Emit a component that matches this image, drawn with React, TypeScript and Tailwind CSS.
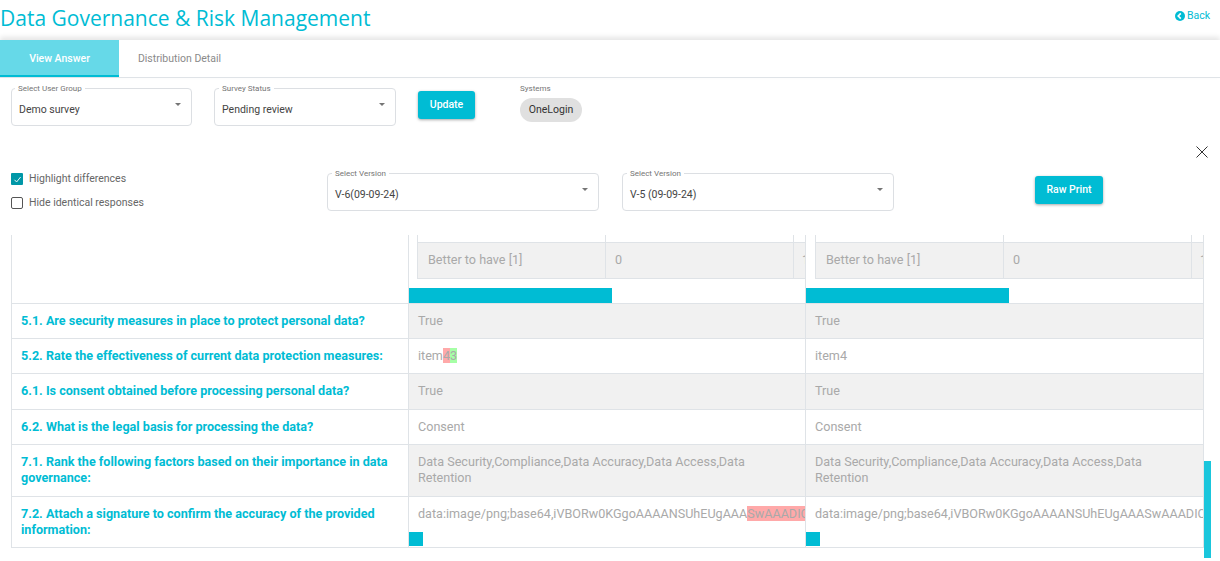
import React from "react";

const CYAN = "bg-[#00bcd4]";

function Select({ label, value, w, lx = "left-[4px]" }: { label: string; value: string; w: string; lx?: string }) {
  return (
    <div className={`relative h-[38px] ${w} rounded-[4px] border border-[#dcdfe3] bg-white flex items-center pl-[7px] pr-[10px] pt-[6px]`}>
      <span className={`absolute ${lx} top-[-5px] bg-white px-[3px] text-[8px] leading-[10px] text-[#757575]`}>{label}</span>
      <span className="flex-1 text-[10.5px] text-[#444]">{value}</span>
      <span className="mb-[11px] w-0 h-0 border-x-[3.5px] border-x-transparent border-t-[3.5px] border-t-[#757575]" />
    </div>
  );
}

function Button({ children, w }: { children: React.ReactNode; w: string }) {
  return (
    <button className={`${w} h-[28px] rounded-[3px] ${CYAN} text-white text-[10.5px] font-medium shadow-[0_1px_3px_rgba(0,0,0,0.35)]`}>
      {children}
    </button>
  );
}

function Check({ checked, label }: { checked?: boolean; label: string }) {
  return (
    <div className="flex items-center gap-[6px] h-[12px]">
      {checked ? (
        <span className="w-[12px] h-[12px] rounded-[1px] bg-[#0097a7] flex items-center justify-center">
          <svg width="9" height="9" viewBox="0 0 9 9" fill="none">
            <path d="M1.5 4.8 3.6 7 7.6 2" stroke="white" strokeWidth="0.9" />
          </svg>
        </span>
      ) : (
        <span className="w-[12px] h-[12px] rounded-[2px] border border-[#555] bg-white" />
      )}
      <span className="text-[10.5px] text-[#666]">{label}</span>
    </div>
  );
}

function Row({
  q,
  a,
  b,
  h,
  gray,
}: {
  q: string;
  a: React.ReactNode;
  b: React.ReactNode;
  h: string;
  gray?: boolean;
}) {
  const shade = gray ? "bg-[#f1f1f1]" : "bg-white";
  return (
    <div className={`flex ${h} border-b border-[#dfe3e7]`}>
      <div className="w-[396px] shrink-0 pl-[9px] pr-[10px] pt-[9px] text-[12.6px] leading-[16px] font-bold text-[#00bcd4]">{q}</div>
      <div className={`w-[397px] shrink-0 border-l border-[#dfe3e7] ${shade} pl-[9px] pr-[30px] pt-[9px] text-[12.6px] leading-[16px] text-[#a9a9a9]`}>{a}</div>
      <div className={`flex-1 min-w-0 border-l border-[#dfe3e7] ${shade} pl-[9px] pr-[30px] pt-[9px] text-[12.6px] leading-[16px] text-[#a9a9a9]`}>{b}</div>
    </div>
  );
}

function Nested({ ml }: { ml: string }) {
  return (
    <div className="relative h-[68px] overflow-hidden">
      <div className={`flex h-[44px] ${ml} border-l border-b border-[#dfe3e7]`}>
        <div className="w-[187px] flex flex-col">
          <div className="h-[8px] border-b border-[#dfe3e7]" />
          <div className="flex-1 bg-[#f1f1f1] pl-[10px] flex items-center text-[12.6px] text-[#a9a9a9]">Better to have [1]</div>
        </div>
        <div className="w-[188px] flex flex-col border-l border-[#dfe3e7]">
          <div className="h-[8px] border-b border-[#dfe3e7]" />
          <div className="flex-1 bg-[#f1f1f1] pl-[9px] flex items-center text-[12.6px] text-[#a9a9a9]">0</div>
        </div>
        <div className="flex-1 min-w-0 flex flex-col border-l border-[#dfe3e7] overflow-hidden">
          <div className="h-[8px] border-b border-[#dfe3e7]" />
          <div className="flex-1 bg-[#f1f1f1] pl-[8px] flex items-center text-[12.6px] text-[#a9a9a9]">1</div>
        </div>
      </div>
      <div className={`mt-[9px] h-[15px] w-[203px] ${CYAN}`} />
    </div>
  );
}

function Data({ tail, hl }: { tail: string; hl?: boolean }) {
  return (
    <div className="-mr-[30px]">
      <div className="whitespace-nowrap overflow-hidden">
        data:image/png;base64,iVBORw0KGgoAAAANSUhEUgAAA
        {hl ? <span className="bg-[#ffa9a9]">{tail}</span> : tail}
      </div>
      <div className={`-ml-[9px] mt-[10px] h-[14px] w-[14px] ${CYAN}`} />
    </div>
  );
}

export default function App() {
  return (
    <div className="relative h-[561px] w-[1220px] overflow-hidden bg-white font-['Roboto',sans-serif]">
      {/* Header */}
      <header className="flex h-[40px] justify-between">
        <h1 className="text-[21px] leading-[37px] text-[#00bcd4] font-['Open_Sans',sans-serif] font-normal">Data Governance &amp; Risk Management</h1>
        <a className="mr-[10px] mt-[9px] flex h-[14px] items-center gap-[2px] text-[10.5px] text-[#00bcd4]">
          <svg width="10" height="10" viewBox="0 0 10 10">
            <circle cx="5" cy="5" r="5" fill="#00bcd4" />
            <path d="M5.8 2.4 3.2 5l2.6 2.6" stroke="white" strokeWidth="1.6" fill="none" />
          </svg>
          Back
        </a>
      </header>

      {/* Tabs */}
      <nav className="flex h-[38px] border-b border-[#dfe3e7] shadow-[0_-3px_5px_rgba(0,0,0,0.1)]">
        <div className="flex h-[37px] w-[119px] items-center justify-center border-b-2 border-[#00bcd4] bg-[#66d9e8] pt-[2px] text-[10.5px] font-medium text-white">View Answer</div>
        <div className="flex h-[37px] w-[121px] items-center justify-center text-[10.5px] text-[#8a8a8a]">Distribution Detail</div>
      </nav>

      {/* Filters */}
      <section className="flex h-[58px] pl-[11px] pt-[10px]">
        <Select label="Select User Group" value="Demo survey" w="w-[181px]" lx="left-[3px]" />
        <div className="ml-[22px]"><Select label="Survey Status" value="Pending review" w="w-[182px]" /></div>
        <div className="ml-[22px] mt-[3px]"><Button w="w-[57px]">Update</Button></div>
        <div className="ml-[45px] flex flex-col">
          <span className="-mt-[4px] mb-[4px] text-[8px] leading-[10px] text-[#757575]">Systems</span>
          <span className="flex h-[24px] w-[62px] items-center justify-center rounded-full bg-[#e0e0e0] text-[10.5px] text-[#333]">OneLogin</span>
        </div>
      </section>

      {/* Compare controls */}
      <section className="relative flex h-[99px] pl-[11px] pt-[37px]">
        <div className="flex w-[316px] flex-col gap-[12px]">
          <Check checked label="Highlight differences" />
          <Check label="Hide identical responses" />
        </div>
        <Select label="Select Version" value="V-6(09-09-24)" w="w-[272px]" />
        <div className="ml-[23px]"><Select label="Select Version" value="V-5 (09-09-24)" w="w-[272px]" /></div>
        <div className="ml-[141px] mt-[3px]"><Button w="w-[68px]">Raw Print</Button></div>
        <svg className="absolute left-[1196px] top-[10px]" width="12" height="12" viewBox="0 0 12 12" stroke="#333" strokeWidth="1" fill="none">
          <path d="M.5.5l11 11M11.5.5l-11 11" />
        </svg>
      </section>

      {/* Comparison table */}
      <section className="ml-[11px] w-[1193px] border-x border-[#dfe3e7]">
        <div className="flex h-[69px] border-b border-[#dfe3e7]">
          <div className="w-[396px] shrink-0" />
          <div className="w-[397px] shrink-0 border-l border-[#dfe3e7]"><Nested ml="ml-[8px]" /></div>
          <div className="flex-1 min-w-0 border-l border-[#dfe3e7]"><Nested ml="ml-[9px]" /></div>
        </div>
        <Row gray h="h-[35px]" q="5.1. Are security measures in place to protect personal data?" a="True" b="True" />
        <Row
          h="h-[35px]"
          q="5.2. Rate the effectiveness of current data protection measures:"
          a={<>item<span className="bg-[#ffa9a9]">4</span><span className="bg-[#a6ffa6]">3</span></>}
          b="item4"
        />
        <Row gray h="h-[36px]" q="6.1. Is consent obtained before processing personal data?" a="True" b="True" />
        <Row h="h-[35px]" q="6.2. What is the legal basis for processing the data?" a="Consent" b="Consent" />
        <Row
          gray
          h="h-[52px]"
          q="7.1. Rank the following factors based on their importance in data governance:"
          a="Data Security,Compliance,Data Accuracy,Data Access,Data Retention"
          b="Data Security,Compliance,Data Accuracy,Data Access,Data Retention"
        />
        <Row
          h="h-[51px]"
          q="7.2. Attach a signature to confirm the accuracy of the provided information:"
          a={<Data hl tail="SwAAADICAYAAABS" />}
          b={<Data tail="SwAAADICAYAAABS" />}
        />
      </section>

      {/* Vertical scroll thumb */}
      <div className="absolute left-[1204px] top-[461px] h-[97px] w-[7px] bg-[#1ac6dc]" />
    </div>
  );
}
